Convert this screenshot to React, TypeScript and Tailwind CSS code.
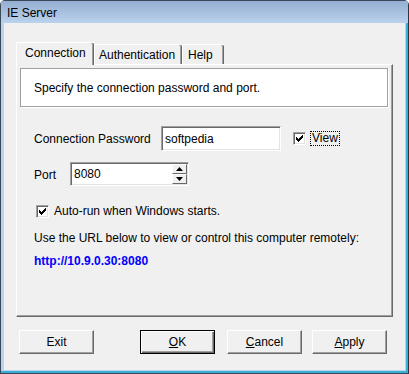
import React from "react";

const checkRows = ["......#", ".....##", "#...###", "##.###.", "#####..", ".###...", "..#...."];

function Check({ checked = true }: { checked?: boolean }) {
  return (
    <span className="flex h-[13px] w-[13px] items-center justify-center border border-t-[#a0a0a0] border-l-[#a0a0a0] border-r-white border-b-white bg-white shadow-[inset_1px_1px_#696969,inset_-1px_-1px_#e3e3e3]">
      {checked && (
        <svg width="7" height="7" viewBox="0 0 7 7" shapeRendering="crispEdges">
          {checkRows.map((row, y) =>
            row.split("").map((c, x) => (c === "#" ? <rect key={`${x}-${y}`} x={x} y={y} width="1" height="1" fill="#000" /> : null))
          )}
        </svg>
      )}
    </span>
  );
}

function Button({ children, isDefault = false, className = "" }: { children: React.ReactNode; isDefault?: boolean; className?: string }) {
  return (
    <div
      className={`flex h-[24px] w-[75px] items-center justify-center bg-[#f0f0f0] ${
        isDefault
          ? "border border-black shadow-[inset_1px_1px_white,inset_-1px_-1px_#696969,inset_-2px_-2px_#a0a0a0]"
          : "border border-t-white border-l-white border-r-[#696969] border-b-[#696969] shadow-[inset_-1px_-1px_#a0a0a0]"
      } ${className}`}
    >
      {children}
    </div>
  );
}

const sunken =
  "border border-t-[#a0a0a0] border-l-[#a0a0a0] border-r-white border-b-white shadow-[inset_1px_1px_#696969,inset_-1px_-1px_#e3e3e3] bg-white";

export default function App() {
  return (
    <div className="h-[374px] w-[409px] overflow-hidden font-['Liberation_Sans',Arial,sans-serif] text-[12px] text-black">
      <div className="flex h-full flex-col rounded-t-[5px] border border-[#3b4858] border-r-[#2a3644] bg-[#bcd3ec] shadow-[inset_-2px_-2px_#3aaed6]">
        {/* title bar */}
        <div className="flex h-[22px] shrink-0 items-center bg-gradient-to-b from-[#94afd2] to-[#bbd2ec] pl-[6px] pt-[2px] text-[12px] leading-none text-black">
          IE Server
        </div>

        <div className="mb-[3px] ml-[3px] mr-[3px] flex flex-1 flex-col bg-[#f0f0f0] pl-[12px] pt-[19px]">
          {/* tabs */}
          <div className="relative z-10 flex h-[22px] items-end">
            <div className="-mb-px flex h-[23px] w-[78px] items-center rounded-t-[2px] border-l border-t border-white bg-[#f0f0f0] pb-[2px] pl-[8px] shadow-[inset_-1px_0_#696969,inset_-2px_0_#a0a0a0]">
              Connection
            </div>
            <div className="flex h-[20px] w-[88px] items-center rounded-t-[2px] border-l border-t border-white pl-[4px] shadow-[inset_-1px_0_#696969,inset_-2px_0_#a0a0a0]">
              Authentication
            </div>
            <div className="flex h-[20px] w-[42px] items-center rounded-t-[2px] border-l border-t border-white pl-[5px] shadow-[inset_-1px_0_#696969,inset_-2px_0_#a0a0a0]">
              Help
            </div>
          </div>

          {/* panel */}
          <div className="flex h-[253px] w-[377px] flex-col border border-t-white border-l-white border-r-[#696969] border-b-[#696969] shadow-[inset_-1px_-1px_#a0a0a0]">
            <div className="ml-[3px] mt-[3px] flex h-[39px] w-[368px] items-center border border-[#a0a0a0] bg-white pl-[13px] shadow-[1px_1px_white]">
              Specify the connection password and port.
            </div>

            <div className="ml-[17px] mt-[19px] flex items-center">
              <span className="w-[127px]">Connection Password</span>
              <div className={`flex h-[25px] w-[120px] items-center pl-[3px] ${sunken}`}>softpedia</div>
              <div className="ml-[12px]">
                <Check />
              </div>
              <span className="ml-[4px] border border-dotted border-black px-[1px] leading-[13px]">View</span>
            </div>

            <div className="ml-[17px] mt-[11px] flex items-center">
              <span className="w-[36px] pt-[2px]">Port</span>
              <div className={`flex h-[24px] w-[119px] items-center justify-between pl-[3px] ${sunken}`}>
                <span>8080</span>
                <div className="mr-[1px] flex h-[20px] w-[15px] flex-col">
                  <div className="flex h-[10px] items-center justify-center border border-t-white border-l-white border-r-[#696969] border-b-[#696969] bg-[#f0f0f0]">
                    <svg width="7" height="4" viewBox="0 0 7 4">
                      <path d="M3.5 0L7 4H0z" fill="#000" />
                    </svg>
                  </div>
                  <div className="flex h-[10px] items-center justify-center border border-t-white border-l-white border-r-[#696969] border-b-[#696969] bg-[#f0f0f0]">
                    <svg width="7" height="4" viewBox="0 0 7 4">
                      <path d="M0 0H7L3.5 4z" fill="#000" />
                    </svg>
                  </div>
                </div>
              </div>
            </div>

            <div className="ml-[19px] mt-[19px] flex items-center">
              <Check />
              <span className="ml-[5px] leading-[13px]">Auto-run when Windows starts.</span>
            </div>

            <div className="ml-[17px] mt-[13px] leading-[14px]">
              Use the URL below to view or control this computer remotely:
            </div>

            <div className="ml-[17px] mt-[9px] font-bold leading-[14px] text-[#0000ff]">http://10.9.0.30:8080</div>
          </div>

          {/* buttons */}
          <div className="mt-[13px] flex">
            <Button className="ml-[3px]">Exit</Button>
            <Button isDefault className="ml-[46px]">
              <span>
                <span className="underline">O</span>K
              </span>
            </Button>
            <Button className="ml-[12px]">
              <span>
                <span className="underline">C</span>ancel
              </span>
            </Button>
            <Button className="ml-[10px]">
              <span>
                <span className="underline">A</span>pply
              </span>
            </Button>
          </div>
        </div>
      </div>
    </div>
  );
}
